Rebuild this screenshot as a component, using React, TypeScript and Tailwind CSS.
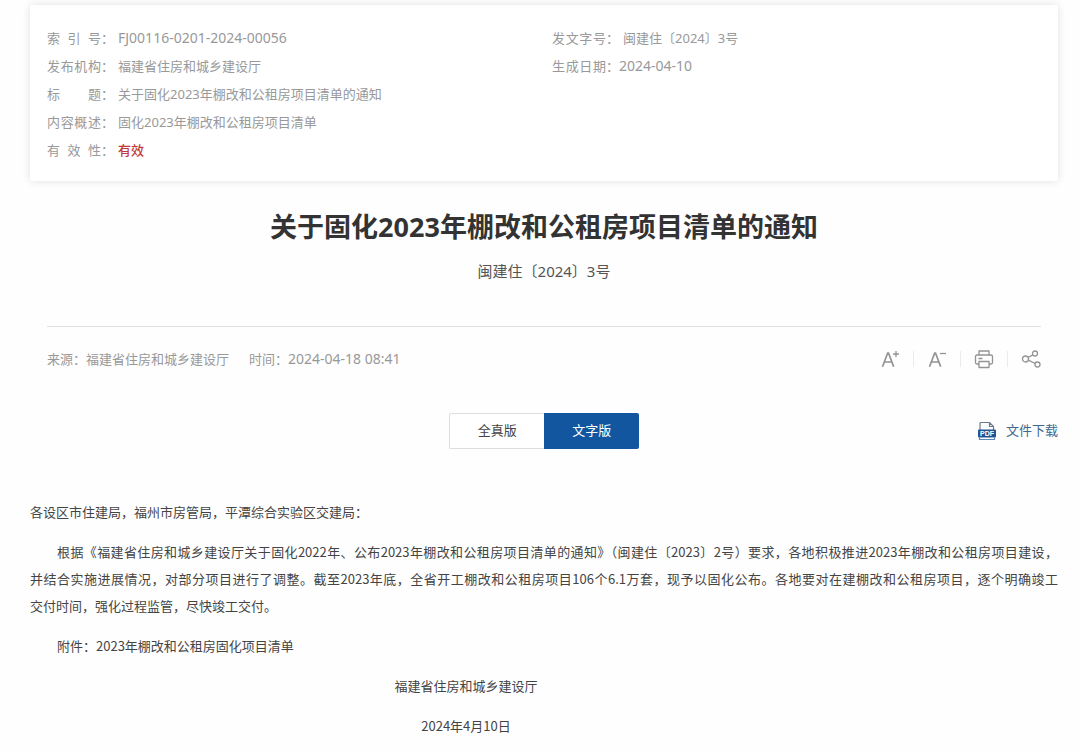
import React from "react";

function Field({
  name,
  children,
  wide = false,
  size = "text-[13px]",
  gap = "pl-1",
}: {
  name: string;
  children: React.ReactNode;
  wide?: boolean;
  size?: string;
  gap?: string;
}) {
  return (
    <div className={wide ? "col-span-2 flex" : "flex"}>
      <dt className="flex shrink-0">
        <span className="w-[54px] shrink-0 [text-align-last:justify]">{name}</span>
        <span>：</span>
      </dt>
      <dd className={`${gap} ${size}`}>{children}</dd>
    </div>
  );
}

function FontIcon({ plus }: { plus: boolean }) {
  return (
    <svg width="20" height="20" viewBox="0 0 20 20" fill="none" stroke="#939393" aria-hidden="true">
      <path d="M2.5 17.8 7.700 4h.800l5.200 13.800M4.500 13h7.200" strokeWidth="1.7" />
      <path d={plus ? "M13 5h6M16 2v6" : "M13 4.500h6"} strokeWidth="1.3" />
    </svg>
  );
}

function PrintIcon() {
  return (
    <svg width="20" height="20" viewBox="0 0 20 20" fill="none" stroke="#939393" strokeWidth="1.3" strokeLinejoin="round" aria-hidden="true">
      <path d="M5 6V2h10v4" />
      <path d="M5 15H3a1.500 1.500 0 0 1-1.500-1.500v-6A1.500 1.500 0 0 1 3 6h14a1.500 1.500 0 0 1 1.500 1.500v6A1.500 1.500 0 0 1 17 15h-2" />
      <path d="M5 12.500h10v6H5zM4.500 9.500h4" />
    </svg>
  );
}

function ShareIcon() {
  return (
    <svg width="20" height="20" viewBox="0 0 20 20" fill="none" stroke="#939393" strokeWidth="1.3" aria-hidden="true">
      <circle cx="4.500" cy="10" r="3" />
      <circle cx="14" cy="4.500" r="2.500" />
      <circle cx="16.500" cy="15.500" r="2.500" />
      <path d="M7 8.500 11.900 5.900M7.300 11.200 14.200 14.500" />
    </svg>
  );
}

function PdfIcon() {
  return (
    <svg width="18" height="20" viewBox="0 0 18 20" fill="none" aria-hidden="true">
      <path d="M2 10V2.500A1 1 0 0 1 3 1.500H11.500L15.500 5.500V10M11.500 1.500V5.500H15.500" stroke="#6b7a8c" strokeWidth="1.2" />
      <rect x="0" y="8.500" width="18" height="8" rx="1" fill="#1f5691" />
      <path d="M1.500 16.500V18.500H16.500V16.500" stroke="#5b86b5" strokeWidth="1.2" />
      <text x="9" y="15.200" textAnchor="middle" fontSize="7" fontWeight="700" fontFamily="Liberation Sans, sans-serif" fill="#fff">
        PDF
      </text>
    </svg>
  );
}

const tools = [
  { name: "放大字体", icon: <FontIcon plus /> },
  { name: "缩小字体", icon: <FontIcon plus={false} /> },
  { name: "打印", icon: <PrintIcon /> },
  { name: "分享", icon: <ShareIcon /> },
];

export default function App() {
  return (
    <div
      lang="zh-CN"
      className="min-h-screen bg-[#fefefe] px-[22px] pt-[5px] pl-[30px] font-['Noto_Sans','Noto_Sans_CJK_SC',sans-serif] text-[13px] text-[#444]"
    >
      <dl className="grid grid-cols-2 gap-x-4 rounded-xs bg-white px-[17px] pt-[19px] pb-[17px] leading-7 text-[#999] shadow-[0_0_8px_rgba(0,0,0,0.12)]">
        <Field name="索 引 号" size="text-sm leading-7">FJ00116-0201-2024-00056</Field>
        <Field name="发文字号">闽建住〔2024〕3号</Field>
        <Field name="发布机构">福建省住房和城乡建设厅</Field>
        <Field name="生成日期" size="text-sm leading-7" gap="pl-0">2024-04-10</Field>
        <Field name="标 题" wide>关于固化2023年棚改和公租房项目清单的通知</Field>
        <Field name="内容概述" wide>固化2023年棚改和公租房项目清单</Field>
        <Field name="有 效 性" wide>
          <span className="font-medium text-[#c23a3a]">有效</span>
        </Field>
      </dl>

      <main>
        <header className="text-center">
          <h1 className="mt-7 text-[27px] leading-9 font-bold text-[#333]">关于固化2023年棚改和公租房项目清单的通知</h1>
          <p className="mt-[14px] text-[15px] leading-6 text-[#555]">闽建住〔2024〕3号</p>
        </header>

        <div className="mx-[17px] mt-[43px] flex items-center justify-between border-t border-[#e2e2e2] pt-5 leading-6 text-[#999]">
          <p className="flex gap-5">
            <span>来源：福建省住房和城乡建设厅</span>
            <span>
              时间：<time className="text-sm leading-6">2024-04-18 08:41</time>
            </span>
          </p>
          <div className="flex items-center">
            {tools.map((t, i) => (
              <React.Fragment key={t.name}>
                {i > 0 && <span className="mx-[13px] h-4 w-px bg-[#ebebeb]" />}
                <button type="button" aria-label={t.name}>
                  {t.icon}
                </button>
              </React.Fragment>
            ))}
          </div>
        </div>

        <div className="mt-[42px] grid grid-cols-3 items-center">
          <div className="col-start-2 flex h-9 w-[190px] justify-self-center">
            <button type="button" className="flex-1 rounded-l-xs border border-r-0 border-[#dedede] bg-white text-[#444]">
              全真版
            </button>
            <button type="button" className="flex-1 rounded-r-xs bg-[#12569f] text-white">
              文字版
            </button>
          </div>
          <a href="#download" className="flex items-center gap-[10px] justify-self-end text-[#41678f]">
            <PdfIcon />
            文件下载
          </a>
        </div>

        <article className="mt-[49px] space-y-[13px] font-['Noto_Sans_CJK_SC',sans-serif] leading-[27px]">
          <p>各设区市住建局，福州市房管局，平潭综合实验区交建局：</p>
          <p className="text-justify indent-[27px]">
            根据《福建省住房和城乡建设厅关于固化2022年、公布2023年棚改和公租房项目清单的通知》（闽建住〔2023〕2号）要求，各地积极推进2023年棚改和公租房项目建设，
            <span className="whitespace-nowrap">并结合实施进展情况</span>
            ，对部分项目进行了调整。截至2023年底，全省开工棚改和公租房项目106个6.1万套，现予以固化公布。各地要对在建棚改和公租房项目，逐个明确竣工
            <span className="whitespace-nowrap">交付时间</span>
            ，强化过程监管，尽快竣工交付。
          </p>
          <p className="indent-[27px]">附件：2023年棚改和公租房固化项目清单</p>
          <div className="space-y-[13px] pr-[156px] text-center">
            <p>福建省住房和城乡建设厅</p>
            <p>2024年4月10日</p>
          </div>
        </article>
      </main>
    </div>
  );
}
